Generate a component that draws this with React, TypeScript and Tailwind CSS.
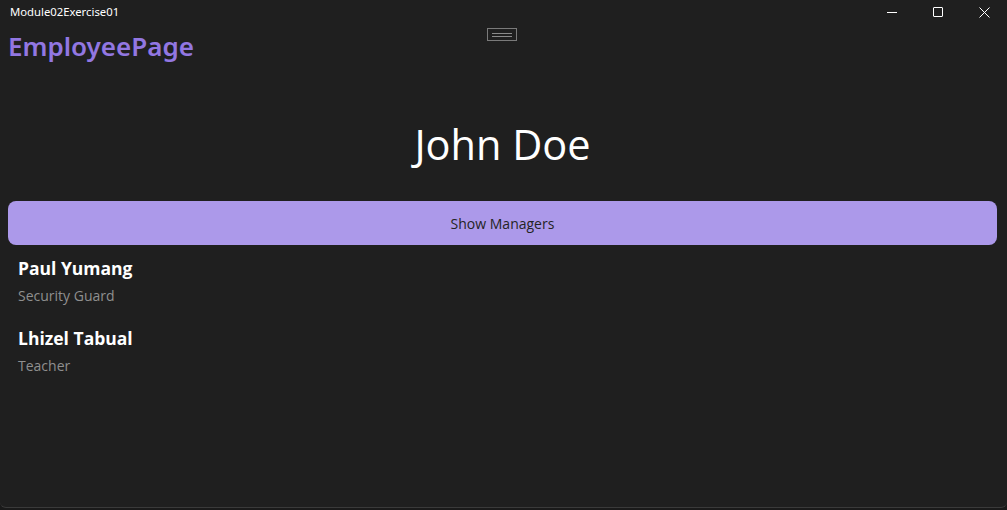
import React from "react";

const people = [
  { name: "Paul Yumang", role: "Security Guard" },
  { name: "Lhizel Tabual", role: "Teacher" },
];

export default function App() {
  return (
    <div className="w-[1007px] h-[510px] bg-[#1a1a1a] overflow-hidden" style={{ fontFamily: '"Open Sans", sans-serif' }}>
      <div className="h-[508px] bg-[#1f1f1f] border-b border-[#3a3a3a] rounded-b-[6px] flex flex-col">
        {/* title bar */}
        <div className="h-[24px] flex items-center relative">
          <span className="pl-[10px] text-[11.3px] text-white leading-none" style={{ fontFamily: '"Noto Sans", sans-serif' }}>
            Module02Exercise01
          </span>
          <div className="ml-auto flex items-center h-full">
            <div className="w-[46px] h-full flex items-center justify-center">
              <div className="w-[10px] h-[1px] bg-white" />
            </div>
            <div className="w-[46px] h-full flex items-center justify-center">
              <div className="w-[10px] h-[10px] border border-white rounded-[1px]" />
            </div>
            <div className="w-[46px] h-full flex items-center justify-center">
              <svg width="11" height="11" viewBox="0 0 11 11">
                <path d="M0.5 0.5 L10.5 10.5 M10.5 0.5 L0.5 10.5" stroke="white" strokeWidth="1" />
              </svg>
            </div>
          </div>
        </div>
        {/* header row */}
        <div className="h-[40px] flex items-start relative">
          <span className="pl-[8px] pt-[7px] text-[26px] font-semibold text-[#9277e2] leading-[30px]" style={{ fontFamily: '"Noto Sans", sans-serif' }}>
            EmployeePage
          </span>
          <div className="absolute left-[487px] top-[4px] w-[30px] h-[13px] border border-[#7a7a7a] flex flex-col items-center justify-center gap-[2px]">
            <div className="w-[20px] h-[1px] bg-[#8a8a8a]" />
            <div className="w-[20px] h-[1px] bg-[#8a8a8a]" />
          </div>
        </div>
        {/* content */}
        <div className="flex flex-col pl-[8px] pr-[10px]">
          <div className="h-[137px] flex items-center justify-center pt-[24px]">
            <span className="text-[41.5px] text-white leading-none">John Doe</span>
          </div>
          <button className="h-[44px] w-full rounded-[8px] bg-[#ac99ea] text-[14px] text-[#242424] flex items-center justify-center">
            Show Managers
          </button>
          <div className="flex flex-col pl-[10px] pt-[11px]">
            {people.map((p) => (
              <div key={p.name} className="h-[70px] flex flex-col">
                <span className="text-[17.5px] font-bold text-white leading-[25px]">{p.name}</span>
                <span className="text-[14px] text-[#8f8f8f] leading-[20px] pt-[5px]">{p.role}</span>
              </div>
            ))}
          </div>
        </div>
      </div>
    </div>
  );
}
